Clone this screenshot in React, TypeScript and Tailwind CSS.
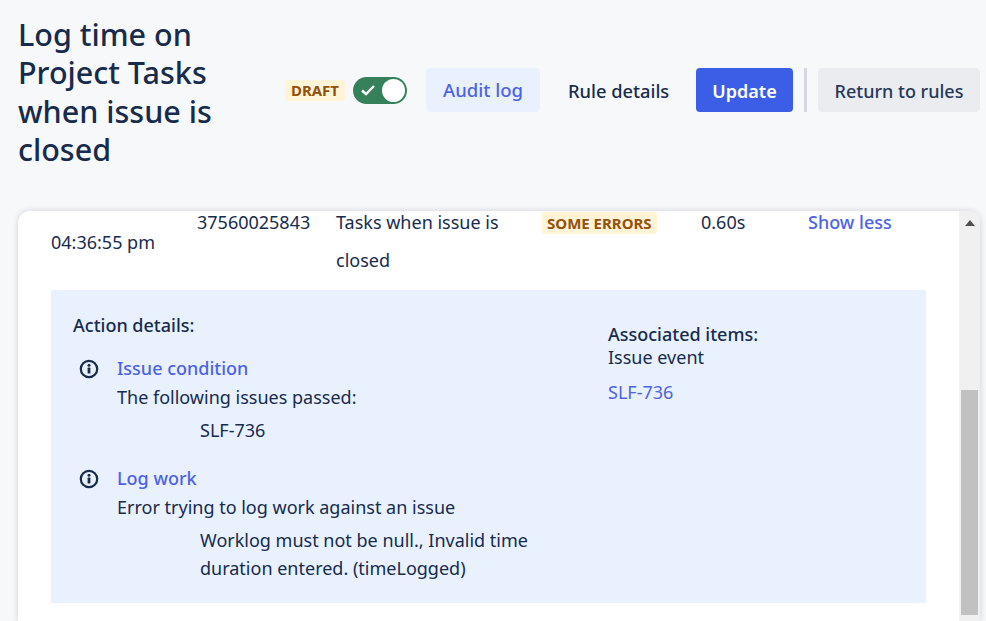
const Info = () => (
  <svg width="20" height="20" viewBox="0 0 20 20" fill="none" className="shrink-0">
    <circle cx="10" cy="10" r="8.2" stroke="#172B4D" strokeWidth="2.2" />
    <circle cx="10" cy="6.2" r="1.5" fill="#172B4D" />
    <rect x="8.6" y="8.6" width="2.8" height="6" rx="0.6" fill="#172B4D" />
  </svg>
);

export default function App() {
  return (
    <div className="w-[986px] h-[621px] overflow-hidden bg-[#f7f8fa] text-[#172b4d] flex flex-col font-['Noto_Sans',sans-serif] text-[18px]">
      <header className="h-[211px] shrink-0 flex pl-[18px] pr-[6px]">
        <div className="w-[267px] pr-[50px] pt-[15px]">
          <h1 className="text-[30.5px] leading-[38.4px] font-medium text-[#172b4d]">
            Log time on Project Tasks when issue is closed
          </h1>
        </div>
        <div className="flex items-center h-[44px] mt-[68px]">
          <span className="h-[21px] px-[6px] rounded-[3px] bg-[#fff4d6] text-[#974f0c] text-[15px] leading-[21px] font-bold">DRAFT</span>
          <span className="ml-[8px] w-[54px] h-[27px] rounded-full bg-[#36805a] flex items-center justify-between pl-[7px] pr-[2px]">
            <svg width="16" height="14" viewBox="0 0 16 14" fill="none">
              <path d="M2 7.5 L6 11 L14 3" stroke="#fff" strokeWidth="2.4" />
            </svg>
            <span className="w-[23px] h-[23px] rounded-full bg-white" />
          </span>
          <button className="ml-[19px] w-[114px] h-[44px] rounded-[4px] bg-[#e9f0fe] text-[#4c63e6] text-[18.5px] font-medium">Audit log</button>
          <button className="ml-[28px] w-[101px] pt-[2px] whitespace-nowrap text-[18.3px] font-medium text-[#172b4d]">Rule details</button>
          <button className="ml-[27px] w-[97px] h-[44px] pt-[2px] rounded-[4px] bg-[#3c5ee6] text-white text-[18px] font-semibold">Update</button>
          <span className="ml-[11px] w-[3px] h-[44px] bg-[#d5d8de]" />
          <button className="ml-[11px] w-[162px] h-[44px] pt-[2px] rounded-[4px] bg-[#ebecf0] text-[#253858] text-[18px] font-medium">Return to rules</button>
        </div>
      </header>
      <main className="flex-1 min-h-0 ml-[18px] mr-[6px] flex rounded-t-[12px] overflow-hidden bg-white shadow-[0_0_6px_rgba(9,30,66,0.18)]">
        <div className="flex-1 min-w-0 overflow-hidden pl-[33px] pr-[33px]">
          <div className="flex -mt-[26px] h-[79px] leading-[38px]">
            <div className="w-[146px]">04/04/2023<br />04:36:55 pm</div>
            <div className="w-[139px] mt-[18px]">37560025843</div>
            <div className="w-[207px] mt-[18px]">Tasks when issue is<br />closed</div>
            <div className="w-[158px] mt-[18px]">
              <span className="-ml-px px-[5px] py-[1px] rounded-[3px] bg-[#fff4d6] text-[#974f0c] text-[15px] font-bold">SOME ERRORS</span>
            </div>
            <div className="w-[107px] mt-[18px]">0.60s</div>
            <div className="mt-[18px] text-[#4c63e6] font-medium">Show less</div>
          </div>
          <div className="mt-[26px] h-[313px] bg-[#e9f1fe] pl-[22px] flex leading-[28px]">
            <div className="w-[535px] pt-[21px]">
              <div className="font-medium h-[28px]">Action details:</div>
              <div className="mt-[15px] flex gap-[18px] pl-[6px]">
                <div className="pt-[5px]"><Info /></div>
                <div className="w-[420px]">
                  <div className="text-[#4c63e6] font-medium leading-[29px]">Issue condition</div>
                  <div className="h-[29px]">The following issues passed:</div>
                  <div className="pl-[83px] mt-[4px]">SLF-736</div>
                </div>
              </div>
              <div className="mt-[20px] flex gap-[18px] pl-[6px]">
                <div className="pt-[5px]"><Info /></div>
                <div className="w-[420px]">
                  <div className="text-[#4c63e6] font-medium leading-[29px]">Log work</div>
                  <div className="h-[29px]">Error trying to log work against an issue</div>
                  <div className="pl-[83px] mt-[4px]">Worklog must not be null., Invalid time duration entered. (timeLogged)</div>
                </div>
              </div>
            </div>
            <div className="pt-[33px]">
              <div className="font-medium leading-[23px]">Associated items:</div>
              <div className="leading-[23px]">Issue event</div>
              <div className="mt-[12px] leading-[23px] text-[#4c63e6]">SLF-736</div>
            </div>
          </div>
        </div>
        <div className="w-[21px] shrink-0 bg-[#f0f0f0] flex flex-col items-center pb-[6px]">
          <svg width="10" height="6" viewBox="0 0 10 6" className="mt-[9px] shrink-0"><path d="M5 0 L10 6 L0 6 Z" fill="#505050" /></svg>
          <div className="flex-1" />
          <div className="w-[17px] h-[225px] bg-[#c1c1c1]" />
        </div>
      </main>
    </div>
  );
}
